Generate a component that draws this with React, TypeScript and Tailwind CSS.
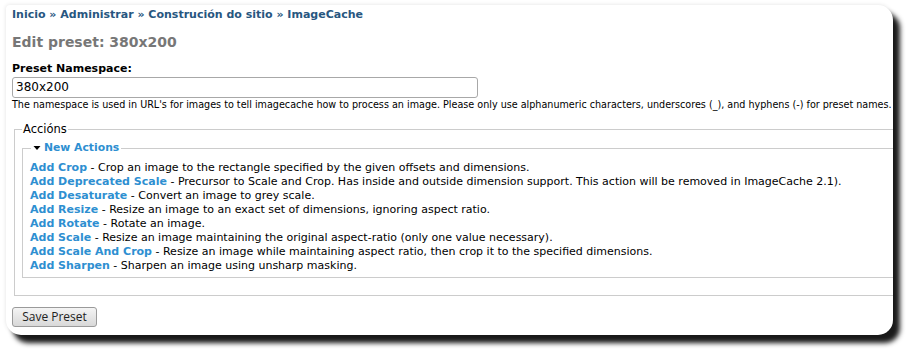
import React from "react";

const actions: [string, string][] = [
  ["Add Crop", "Crop an image to the rectangle specified by the given offsets and dimensions."],
  ["Add Deprecated Scale", "Precursor to Scale and Crop. Has inside and outside dimension support. This action will be removed in ImageCache 2.1)."],
  ["Add Desaturate", "Convert an image to grey scale."],
  ["Add Resize", "Resize an image to an exact set of dimensions, ignoring aspect ratio."],
  ["Add Rotate", "Rotate an image."],
  ["Add Scale", "Resize an image maintaining the original aspect-ratio (only one value necessary)."],
  ["Add Scale And Crop", "Resize an image while maintaining aspect ratio, then crop it to the specified dimensions."],
  ["Add Sharpen", "Sharpen an image using unsharp masking."],
];

export default function App() {
  return (
    <div className="w-[916px] h-[358px] bg-white pt-[5px] pl-[6px] font-['DejaVu_Sans',sans-serif] text-black">
      <div className="w-[887px] h-[330px] bg-white rounded-[15px] rounded-tl-[4px] overflow-hidden shadow-[7px_8px_5px_rgba(0,0,0,0.9),0_0_4px_rgba(0,0,0,0.12)] pl-[6px] pt-[3px]">
        <div className="text-[11px] font-bold text-[#27567f] leading-[14px]">
          Inicio » Administrar » Construción do sitio » ImageCache
        </div>
        <h1 className="mt-[11px] text-[14px] font-bold text-[#777] leading-[18px]">Edit preset: 380x200</h1>
        <div className="mt-[12px] text-[11px] font-bold leading-[12px]">Preset Namespace:</div>
        <div className="mt-[2px] w-[466px] h-[21px] border border-[#a8a8a8] rounded-[3px] px-[3px] text-[12px] leading-[19px] bg-white">
          380x200
        </div>
        <div className="mt-0 text-[9.62px] leading-[14px] whitespace-nowrap">
          The namespace is used in URL's for images to tell imagecache how to process an image. Please only use alphanumeric characters, underscores (_), and hyphens (-) for preset names.
        </div>
        <fieldset className="mt-[10px] ml-[2px] -mr-[20px] border border-[#cccccc] pl-[7px] pr-[10px] pb-[17px] min-w-0">
          <legend className="text-[11.5px] leading-[14px] px-[1px]">Accións</legend>
          <fieldset className="mt-[5px] border border-[#cccccc] pl-[7px] pb-[4px] min-w-0">
            <legend className="ml-[1px] px-[2px] text-[10.8px] font-bold text-[#2e8fd1] leading-[14px] flex items-center">
              <svg width="8" height="6" viewBox="0 0 8 6" className="mr-[3px]">
                <path d="M0.5 1 L7.5 1 L4 5 Z" fill="#000" />
              </svg>
              New Actions
            </legend>
            <div className="mt-[6px] text-[11px] leading-[14px] whitespace-nowrap">
              {actions.map(([name, desc]) => (
                <div key={name}>
                  <span className="font-bold text-[#2e8fd1]">{name}</span> - {desc}
                </div>
              ))}
            </div>
          </fieldset>
        </fieldset>
        <button className="mt-[11px] w-[85px] h-[20px] border border-[#9a9a9a] rounded-[3px] bg-gradient-to-b from-[#f4f4f4] to-[#d8d8d8] text-[12px] text-[#222] leading-[18px] font-['Open_Sans',sans-serif]">
          Save Preset
        </button>
      </div>
    </div>
  );
}
